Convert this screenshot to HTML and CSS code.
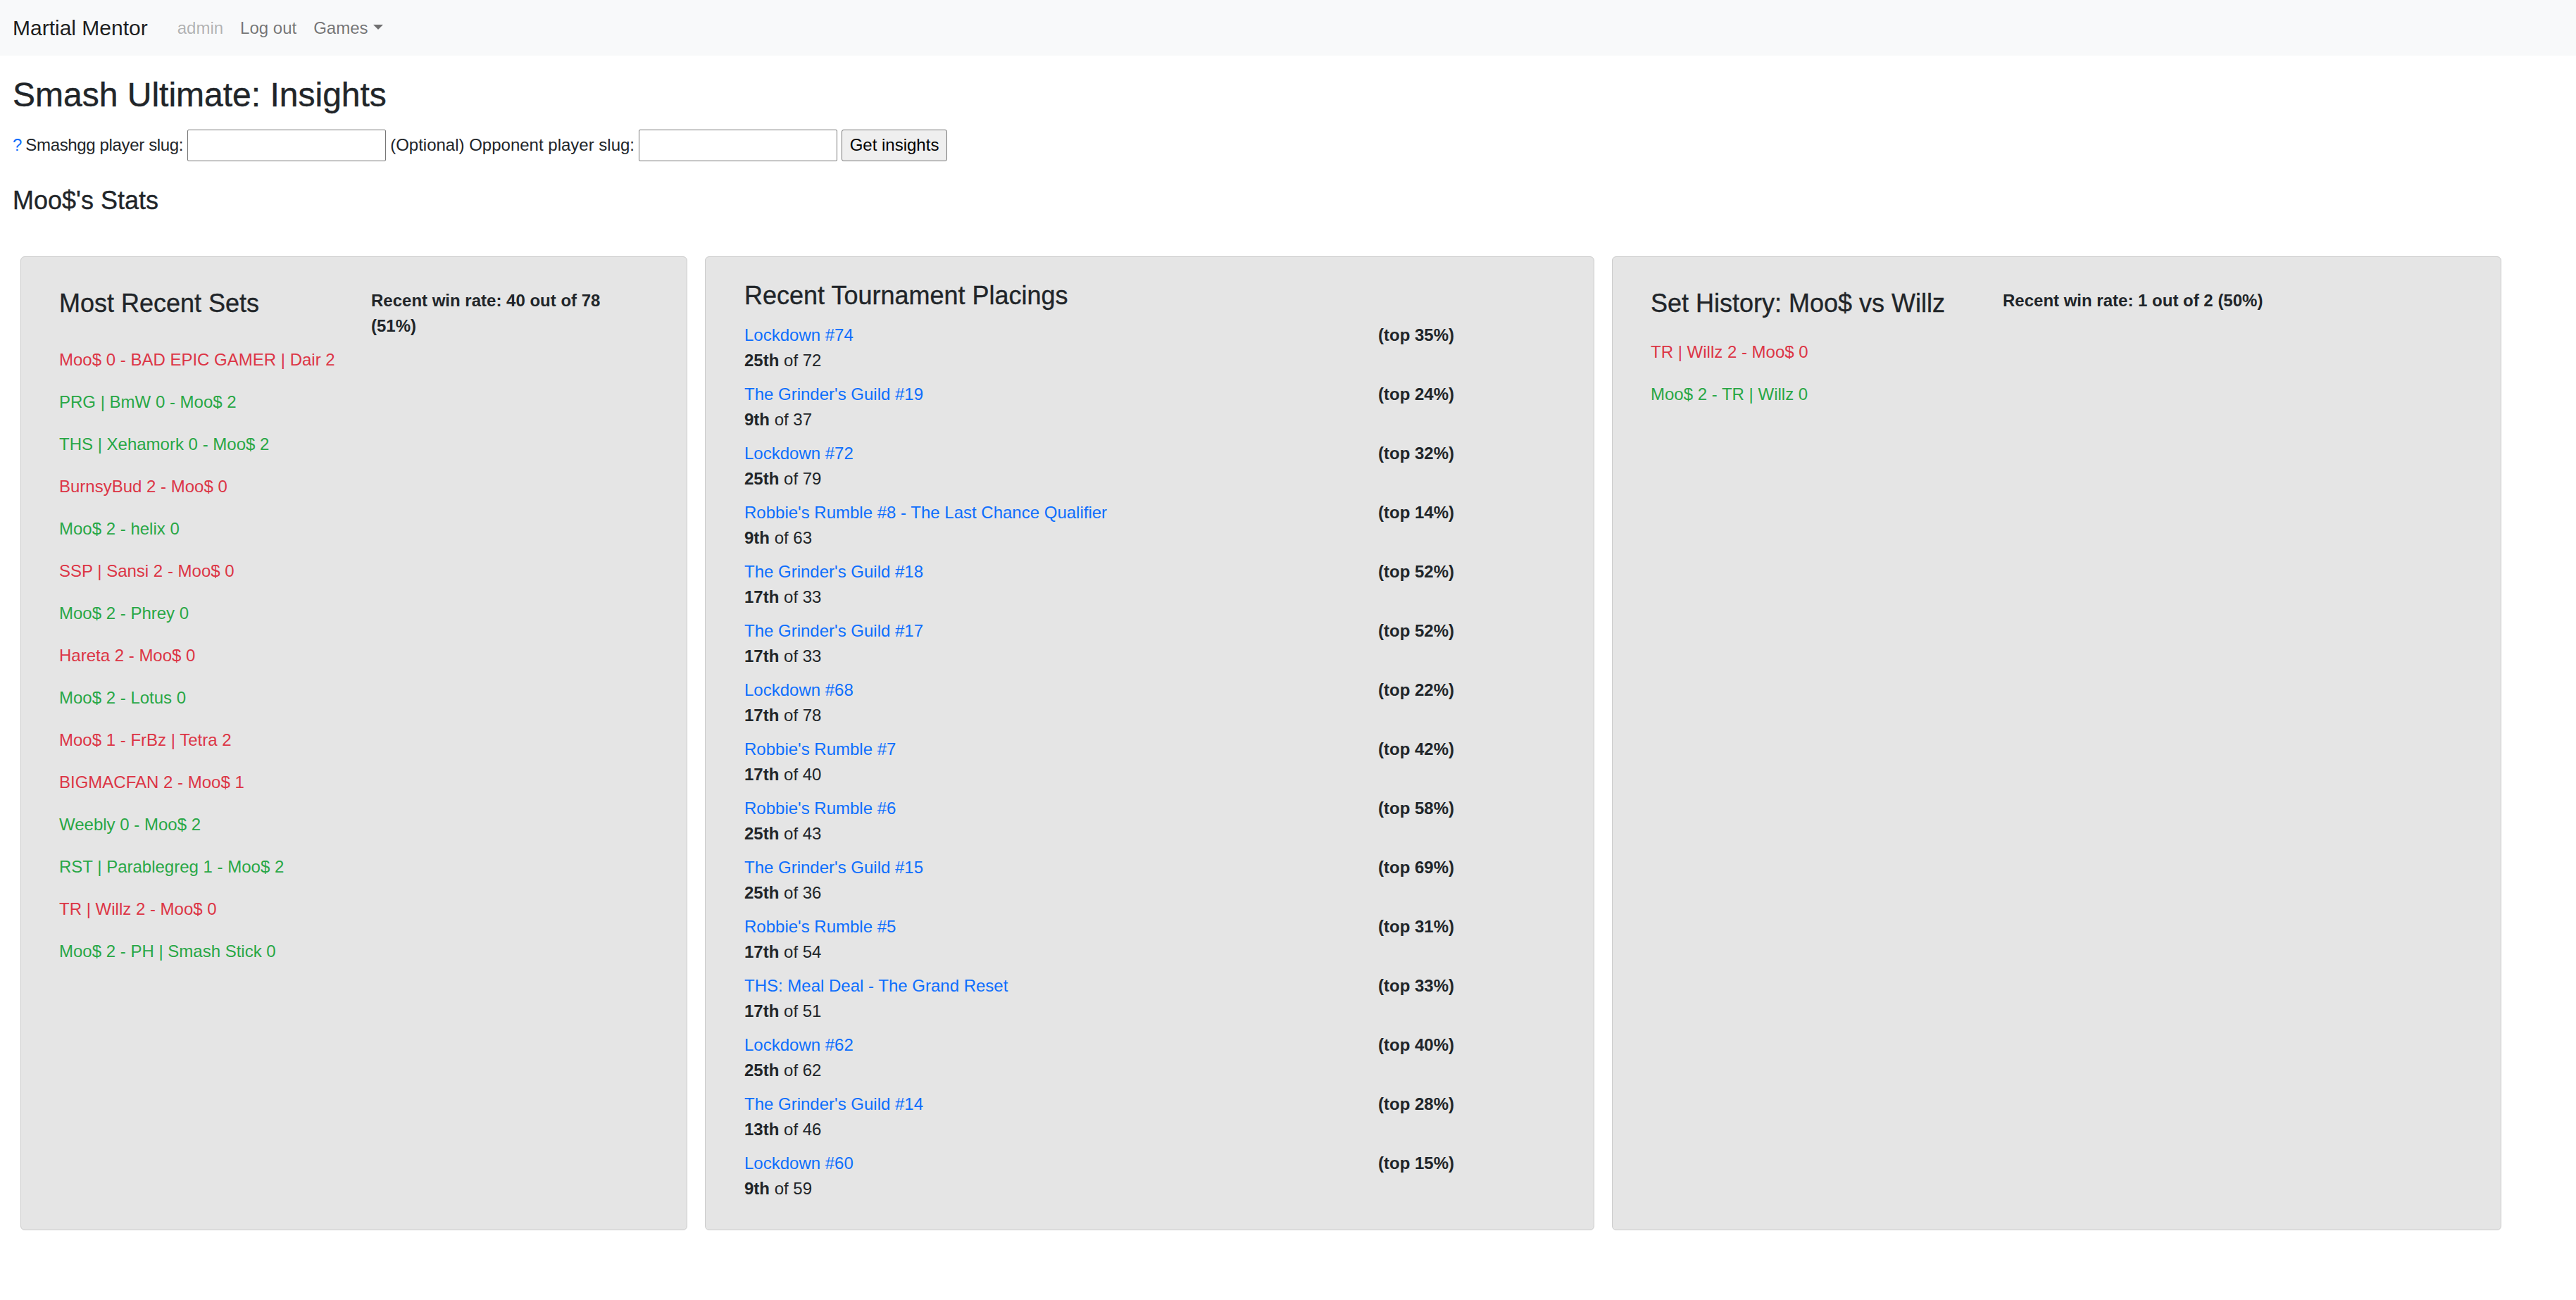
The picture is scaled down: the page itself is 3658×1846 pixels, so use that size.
FILE: index.html
```html
<!DOCTYPE html>
<html lang="en">
<head>
<meta charset="utf-8">
<title>Smash Ultimate: Insights</title>
<link rel="stylesheet" href="styles.css">
</head>
<body>
<nav class="navbar">
  <a class="brand" href="#">Martial Mentor</a>
  <ul class="nav">
    <li><span class="nav-link disabled">admin</span></li>
    <li><a class="nav-link" href="#">Log out</a></li>
    <li><a class="nav-link dropdown-toggle" href="#">Games</a></li>
  </ul>
</nav>
<main class="page">
  <h2 class="title">Smash Ultimate: Insights</h2>
  <form class="search">
    <a class="help" href="#">?</a>
    <label class="label-player">Smashgg player slug:</label>
    <input type="text" class="slug">
    <label>(Optional) Opponent player slug:</label>
    <input type="text" class="slug">
    <button type="button" class="btn">Get insights</button>
  </form>
  <h4 class="stats-title">Moo$'s Stats</h4>
  <div class="cards">
    <section class="card card-sets">
      <div class="card-head">
        <h4 class="card-title">Most Recent Sets</h4>
        <p class="winrate">Recent win rate: 40 out of 78 (51%)</p>
      </div>
      <p class="set loss">Moo$ 0 - BAD EPIC GAMER | Dair 2</p>
      <p class="set win">PRG | BmW 0 - Moo$ 2</p>
      <p class="set win">THS | Xehamork 0 - Moo$ 2</p>
      <p class="set loss">BurnsyBud 2 - Moo$ 0</p>
      <p class="set win">Moo$ 2 - helix 0</p>
      <p class="set loss">SSP | Sansi 2 - Moo$ 0</p>
      <p class="set win">Moo$ 2 - Phrey 0</p>
      <p class="set loss">Hareta 2 - Moo$ 0</p>
      <p class="set win">Moo$ 2 - Lotus 0</p>
      <p class="set loss">Moo$ 1 - FrBz | Tetra 2</p>
      <p class="set loss">BIGMACFAN 2 - Moo$ 1</p>
      <p class="set win">Weebly 0 - Moo$ 2</p>
      <p class="set win">RST | Parablegreg 1 - Moo$ 2</p>
      <p class="set loss">TR | Willz 2 - Moo$ 0</p>
      <p class="set win">Moo$ 2 - PH | Smash Stick 0</p>
    </section>
    <section class="card card-placings">
      <h4 class="card-title">Recent Tournament Placings</h4>
      <div class="placing"><div><a href="#">Lockdown #74</a><div><b>25th</b> of 72</div></div><b>(top 35%)</b></div>
      <div class="placing"><div><a href="#">The Grinder's Guild #19</a><div><b>9th</b> of 37</div></div><b>(top 24%)</b></div>
      <div class="placing"><div><a href="#">Lockdown #72</a><div><b>25th</b> of 79</div></div><b>(top 32%)</b></div>
      <div class="placing"><div><a href="#">Robbie's Rumble #8 - The Last Chance Qualifier</a><div><b>9th</b> of 63</div></div><b>(top 14%)</b></div>
      <div class="placing"><div><a href="#">The Grinder's Guild #18</a><div><b>17th</b> of 33</div></div><b>(top 52%)</b></div>
      <div class="placing"><div><a href="#">The Grinder's Guild #17</a><div><b>17th</b> of 33</div></div><b>(top 52%)</b></div>
      <div class="placing"><div><a href="#">Lockdown #68</a><div><b>17th</b> of 78</div></div><b>(top 22%)</b></div>
      <div class="placing"><div><a href="#">Robbie's Rumble #7</a><div><b>17th</b> of 40</div></div><b>(top 42%)</b></div>
      <div class="placing"><div><a href="#">Robbie's Rumble #6</a><div><b>25th</b> of 43</div></div><b>(top 58%)</b></div>
      <div class="placing"><div><a href="#">The Grinder's Guild #15</a><div><b>25th</b> of 36</div></div><b>(top 69%)</b></div>
      <div class="placing"><div><a href="#">Robbie's Rumble #5</a><div><b>17th</b> of 54</div></div><b>(top 31%)</b></div>
      <div class="placing"><div><a href="#">THS: Meal Deal - The Grand Reset</a><div><b>17th</b> of 51</div></div><b>(top 33%)</b></div>
      <div class="placing"><div><a href="#">Lockdown #62</a><div><b>25th</b> of 62</div></div><b>(top 40%)</b></div>
      <div class="placing"><div><a href="#">The Grinder's Guild #14</a><div><b>13th</b> of 46</div></div><b>(top 28%)</b></div>
      <div class="placing"><div><a href="#">Lockdown #60</a><div><b>9th</b> of 59</div></div><b>(top 15%)</b></div>
    </section>
    <section class="card card-history">
      <div class="card-head">
        <h4 class="card-title">Set History: Moo$ vs Willz</h4>
        <p class="winrate">Recent win rate: 1 out of 2 (50%)</p>
      </div>
      <p class="set loss">TR | Willz 2 - Moo$ 0</p>
      <p class="set win">Moo$ 2 - TR | Willz 0</p>
    </section>
  </div>
</main>
</body>
</html>
```
FILE: styles.css
```css
* { box-sizing: border-box; }

body {
  margin: 0;
  font-family: "Liberation Sans", Arial, sans-serif;
  font-size: 24px;
  line-height: 36px;
  color: #212529;
  background: #fff;
}

a { color: #0d6efd; text-decoration: none; }

/* navbar */
.navbar {
  height: 79px;
  background: #f8f9fa;
  display: flex;
  align-items: center;
  padding: 0 18px;
}
.brand {
  font-size: 30px;
  line-height: 45px;
  color: rgba(0, 0, 0, 0.9);
  margin-right: 30px;
}
.nav {
  display: flex;
  list-style: none;
  margin: 0;
  padding: 0;
}
.nav-link {
  display: block;
  padding: 0 12px;
  color: rgba(0, 0, 0, 0.55);
}
.nav-link.disabled { color: rgba(0, 0, 0, 0.3); }
.dropdown-toggle::after {
  content: "";
  display: inline-block;
  margin-left: 7px;
  vertical-align: 6px;
  border-top: 7px solid;
  border-left: 7px solid transparent;
  border-right: 7px solid transparent;
}

/* page */
.page { padding: 27px 18px 0; }

.title {
  margin: 0;
  font-size: 48px;
  line-height: 57.6px;
  font-weight: 400;
  -webkit-text-stroke: 0.4px currentColor;
}

.search {
  display: flex;
  align-items: center;
  gap: 6px;
  margin-top: 20px;
  height: 45px;
}
.help { margin-right: -1px; }
.label-player { letter-spacing: -0.35px; }
.slug {
  width: 282px;
  height: 45px;
  border: 1px solid #767676;
  border-radius: 2px;
  background: #fff;
  font: inherit;
  padding: 0 4px;
}
.btn {
  height: 45px;
  width: 150px;
  border: 1px solid #767676;
  border-radius: 3px;
  background: #efefef;
  font: inherit;
  color: #000;
  padding: 0;
}

.stats-title {
  margin: 34px 0 0;
  font-size: 36px;
  line-height: 43.2px;
  font-weight: 400;
  -webkit-text-stroke: 0.35px currentColor;
}

/* cards */
.cards {
  display: flex;
  gap: 25px;
  margin: 58px 0 0 11px;
  align-items: stretch;
}
.card {
  background: #e5e5e5;
  border: 1px solid #cbcbcb;
  border-radius: 6px;
  flex: none;
}
.card-sets { width: 947px; padding: 44px 20px 28px 54px; }
.card-placings { width: 1263px; padding: 33px 20px 28px 55px; }
.card-history { width: 1263px; padding: 44px 20px 28px 54px; }

.card-title {
  margin: 0 0 29.5px;
  font-size: 36px;
  line-height: 43.2px;
  font-weight: 400;
  color: #212529;
  -webkit-text-stroke: 0.35px currentColor;
}
.card-placings .card-title { margin-bottom: 16.5px; }

.card-head { display: flex; align-items: flex-start; }
.card-head .card-title { flex: none; width: 443px; }
.card-history .card-head .card-title { width: 500px; }
.winrate {
  margin: 0 0 12px;
  width: 370px;
  font-weight: 700;
}
.card-history .winrate { width: 500px; }

.set { margin: 0 0 24px; }
.set.win { color: #28a745; }
.set.loss { color: #dc3545; }

.placing {
  display: grid;
  grid-template-columns: 900px auto;
  margin-bottom: 12px;
}
.placing a { display: block; }
.placing b { font-weight: 700; }
```
